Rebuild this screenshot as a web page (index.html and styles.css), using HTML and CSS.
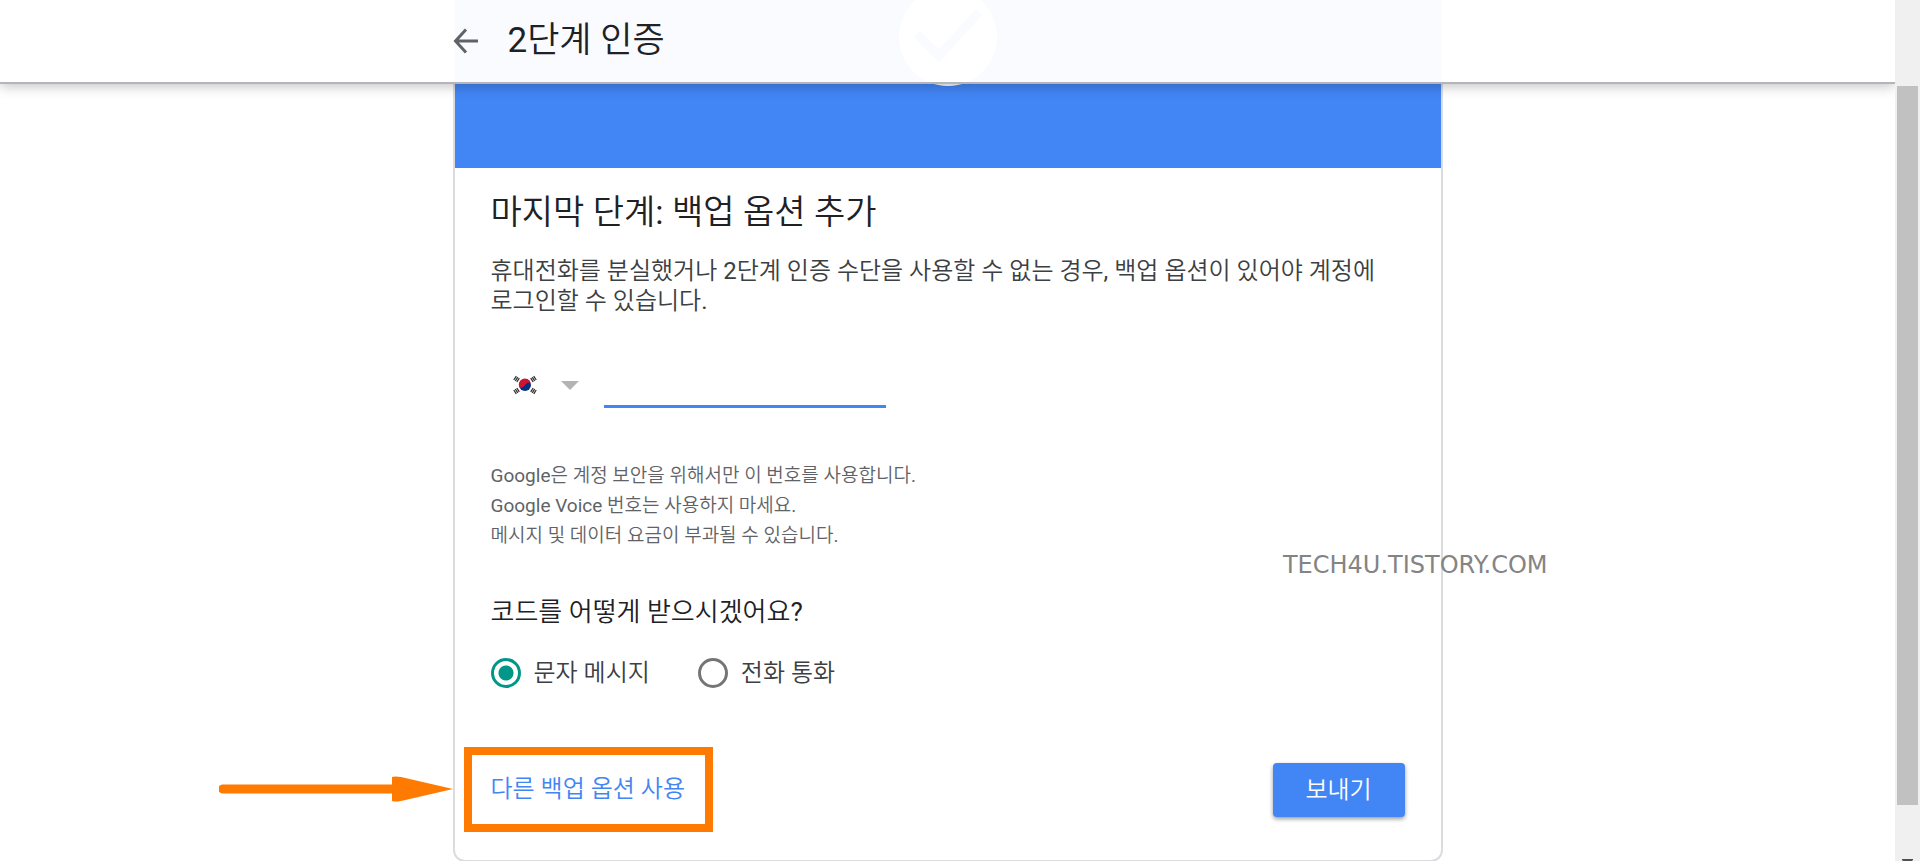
FILE: index.html
```html
<!DOCTYPE html>
<html lang="ko">
<head>
<meta charset="utf-8">
<title>2단계 인증</title>
<link rel="stylesheet" href="styles.css">
</head>
<body>
<div class="page">
  <header class="topbar">
    <div class="topbar-inner">
      <a class="back" href="#" aria-label="뒤로">
        <svg width="25" height="26" viewBox="0 0 25 26"><path d="M13 1.500L2.500 13 13 24.500M2.500 13H25" fill="none" stroke="#5f6368" stroke-width="3"/></svg>
      </a>
      <h1 class="title">2단계 인증</h1>
    </div>
  </header>

  <main class="card">
    <div class="banner">
      <svg class="check" width="98" height="98" viewBox="0 0 98 98"><circle cx="49" cy="49" r="49" fill="#fff"/><path d="M18 46l22 22 40-44" fill="none" stroke="#4285f4" stroke-width="9"/></svg>
    </div>
    <form class="content">
      <h2 class="heading">마지막 단계: 백업 옵션 추가</h2>
      <p class="lead">휴대전화를 분실했거나 2단계 인증 수단을 사용할 수 없는 경우, 백업 옵션이 있어야 계정에 로그인할 수 있습니다.</p>

      <div class="phone">
        <div class="country">
          <select class="country-select" aria-label="국가"><option value="KR" label=" "></option></select>
          <svg class="flag" width="24" height="20" viewBox="0 0 24 20">
            <circle cx="12" cy="10" r="6" fill="#0a2f80"/>
            <path d="M6.600 12.500A6 6 0 1 1 17.600 8C16 6.800 13.500 7.500 12 10S8 13 6.600 12.500z" fill="#cd1533"/>
            <g stroke="#333" stroke-width="1.300">
              <path d="M.8 5L3.300 1.200M2.300 6L4.800 2.200M3.800 7L6.300 3.200"/>
              <path d="M23.200 5L20.700 1.200M21.700 6L19.200 2.200M20.200 7L17.700 3.200"/>
              <path d="M.8 15L3.300 18.800M2.300 14L4.800 17.800M3.800 13L6.300 16.800"/>
              <path d="M23.200 15L20.700 18.800M21.700 14L19.200 17.800M20.200 13L17.700 16.800"/>
            </g>
          </svg>
          <svg class="caret" width="18" height="9" viewBox="0 0 18 9"><path d="M0 0h18L9 9z" fill="#b4b4b4"/></svg>
        </div>
        <input class="phone-input" type="tel" aria-label="전화번호">
      </div>

      <p class="hint">Google은 계정 보안을 위해서만 이 번호를 사용합니다.<br>Google Voice 번호는 사용하지 마세요.<br>메시지 및 데이터 요금이 부과될 수 있습니다.</p>

      <fieldset class="delivery">
        <legend class="question">코드를 어떻게 받으시겠어요?</legend>
        <div class="choices">
          <label class="choice"><input class="radio" type="radio" name="delivery" checked><span>문자 메시지</span></label>
          <label class="choice"><input class="radio" type="radio" name="delivery"><span>전화 통화</span></label>
        </div>
      </fieldset>

      <div class="actions">
        <div class="alternative">
          <a class="alt-link" href="#">다른 백업 옵션 사용</a>
          <span class="highlight"></span>
          <svg class="pointer" width="234" height="26" viewBox="0 0 234 26"><path d="M0 10L3 8.500H173V1Q176 0 182 1L234 13 182 25Q176 26 173 25V17.500H3L0 16z" fill="#ff7a00"/></svg>
        </div>
        <button class="send" type="button">보내기</button>
      </div>
    </form>
    <span class="watermark">TECH4U.TISTORY.COM</span>
  </main>
</div>
<div class="scrollbar">
  <div class="thumb"></div>
  <svg class="scroll-down" width="11" height="6" viewBox="0 0 11 6"><path d="M0 0h11v1L5.500 6 0 1z" fill="#505050"/></svg>
</div>
</body>
</html>
```
FILE: styles.css
```css
* {
  box-sizing: border-box;
}

body {
  margin: 0;
  display: flex;
  height: 100vh;
  overflow: hidden;
  background: #fff;
  color: #202124;
  font-family: Roboto, "Noto Sans CJK KR DemiLight", "Noto Sans CJK KR", sans-serif;
  font-weight: 400;
  word-break: keep-all;
}

.page {
  position: relative;
  flex: 1;
  overflow: hidden;
}

.topbar {
  position: absolute;
  top: 0;
  left: 0;
  right: 0;
  z-index: 2;
  height: 84px;
  background: rgba(255, 255, 255, 0.97);
  border-bottom: 2px solid #b4b5ba;
  box-shadow: 0 2px 12px rgba(0, 0, 0, 0.25);
}

.topbar-inner {
  display: flex;
  align-items: center;
  gap: 30px;
  max-width: 990px;
  height: 82px;
  margin: 0 auto;
}

.back {
  display: flex;
}

.title {
  margin: 0;
  font-size: 35px;
  line-height: 40px;
  font-weight: 400;
}

.card {
  position: relative;
  max-width: 990px;
  margin: 0 auto;
  border: 2px solid #dadce0;
  border-top: 0;
  border-radius: 0 0 12px 12px;
}

.banner {
  display: flex;
  justify-content: center;
  align-items: flex-start;
  height: 168px;
  background: #4285f4;
}

.check {
  margin-top: -12px;
}

.content {
  padding: 24px 36px 43px;
}

.heading {
  margin: 0;
  font-size: 34px;
  line-height: 40px;
  font-weight: 400;
}

.lead {
  margin: 24px 0 0;
  color: #3c4043;
  font-size: 24px;
  line-height: 30px;
}

.phone {
  display: flex;
  gap: 17px;
  height: 64px;
  margin-top: 28px;
}

.country {
  position: relative;
  width: 96px;
}

.country-select {
  width: 100%;
  height: 100%;
  border: 0;
  background: transparent;
  appearance: none;
}

.flag {
  position: absolute;
  top: 31px;
  left: 22px;
  pointer-events: none;
}

.caret {
  position: absolute;
  top: 37px;
  right: 8px;
  pointer-events: none;
}

.phone-input {
  width: 282px;
  padding: 0;
  border: 0;
  border-bottom: 3px solid #4285f4;
  background: transparent;
  font: inherit;
  font-size: 24px;
  outline: 0;
}

.hint {
  margin: 53px 0 0;
  color: #5f6368;
  font-size: 19px;
  line-height: 30px;
}

.delivery {
  margin: 45px 0 0;
  padding: 0;
  border: 0;
}

.question {
  padding: 0;
  font-size: 26px;
  line-height: 32px;
}

.choices {
  display: flex;
  gap: 48px;
  margin-top: 29px;
  color: #3c4043;
  font-size: 24px;
  line-height: 32px;
}

.choice {
  display: flex;
  align-items: center;
  gap: 13px;
}

.radio {
  width: 30px;
  height: 30px;
  margin: 0;
  border: 3px solid #757575;
  border-radius: 50%;
  appearance: none;
}

.radio:checked {
  border-color: #009688;
  background: radial-gradient(circle, #009688 7px, transparent 8px);
}

.actions {
  display: flex;
  justify-content: space-between;
  align-items: center;
  margin-top: 74px;
}

.alternative {
  position: relative;
  padding-bottom: 2px;
}

.alt-link {
  color: #4285f4;
  font-size: 24px;
  line-height: 32px;
  text-decoration: none;
}

.highlight {
  position: absolute;
  inset: -26px -28px -25px -27px;
  border: 8px solid #ff7a00;
  pointer-events: none;
}

.pointer {
  position: absolute;
  top: 3px;
  right: calc(100% + 38px);
}

.send {
  width: 132px;
  height: 54px;
  padding: 0 0 6px;
  border: 0;
  border-radius: 4px;
  background: #4285f4;
  box-shadow: 0 2px 4px rgba(0, 0, 0, 0.4);
  color: #fff;
  font: inherit;
  font-size: 24px;
}

.watermark {
  position: absolute;
  top: 551px;
  right: -107px;
  color: #848484;
  font-family: "DejaVu Sans", sans-serif;
  font-size: 24px;
  line-height: 28px;
  font-weight: 400;
}

.scrollbar {
  position: relative;
  width: 25px;
  background: #f0f0f0;
}

.thumb {
  height: 719px;
  margin: 86px 2px 0;
  background: #c1c1c1;
}

.scroll-down {
  position: absolute;
  bottom: -4px;
  left: 7px;
}
```
